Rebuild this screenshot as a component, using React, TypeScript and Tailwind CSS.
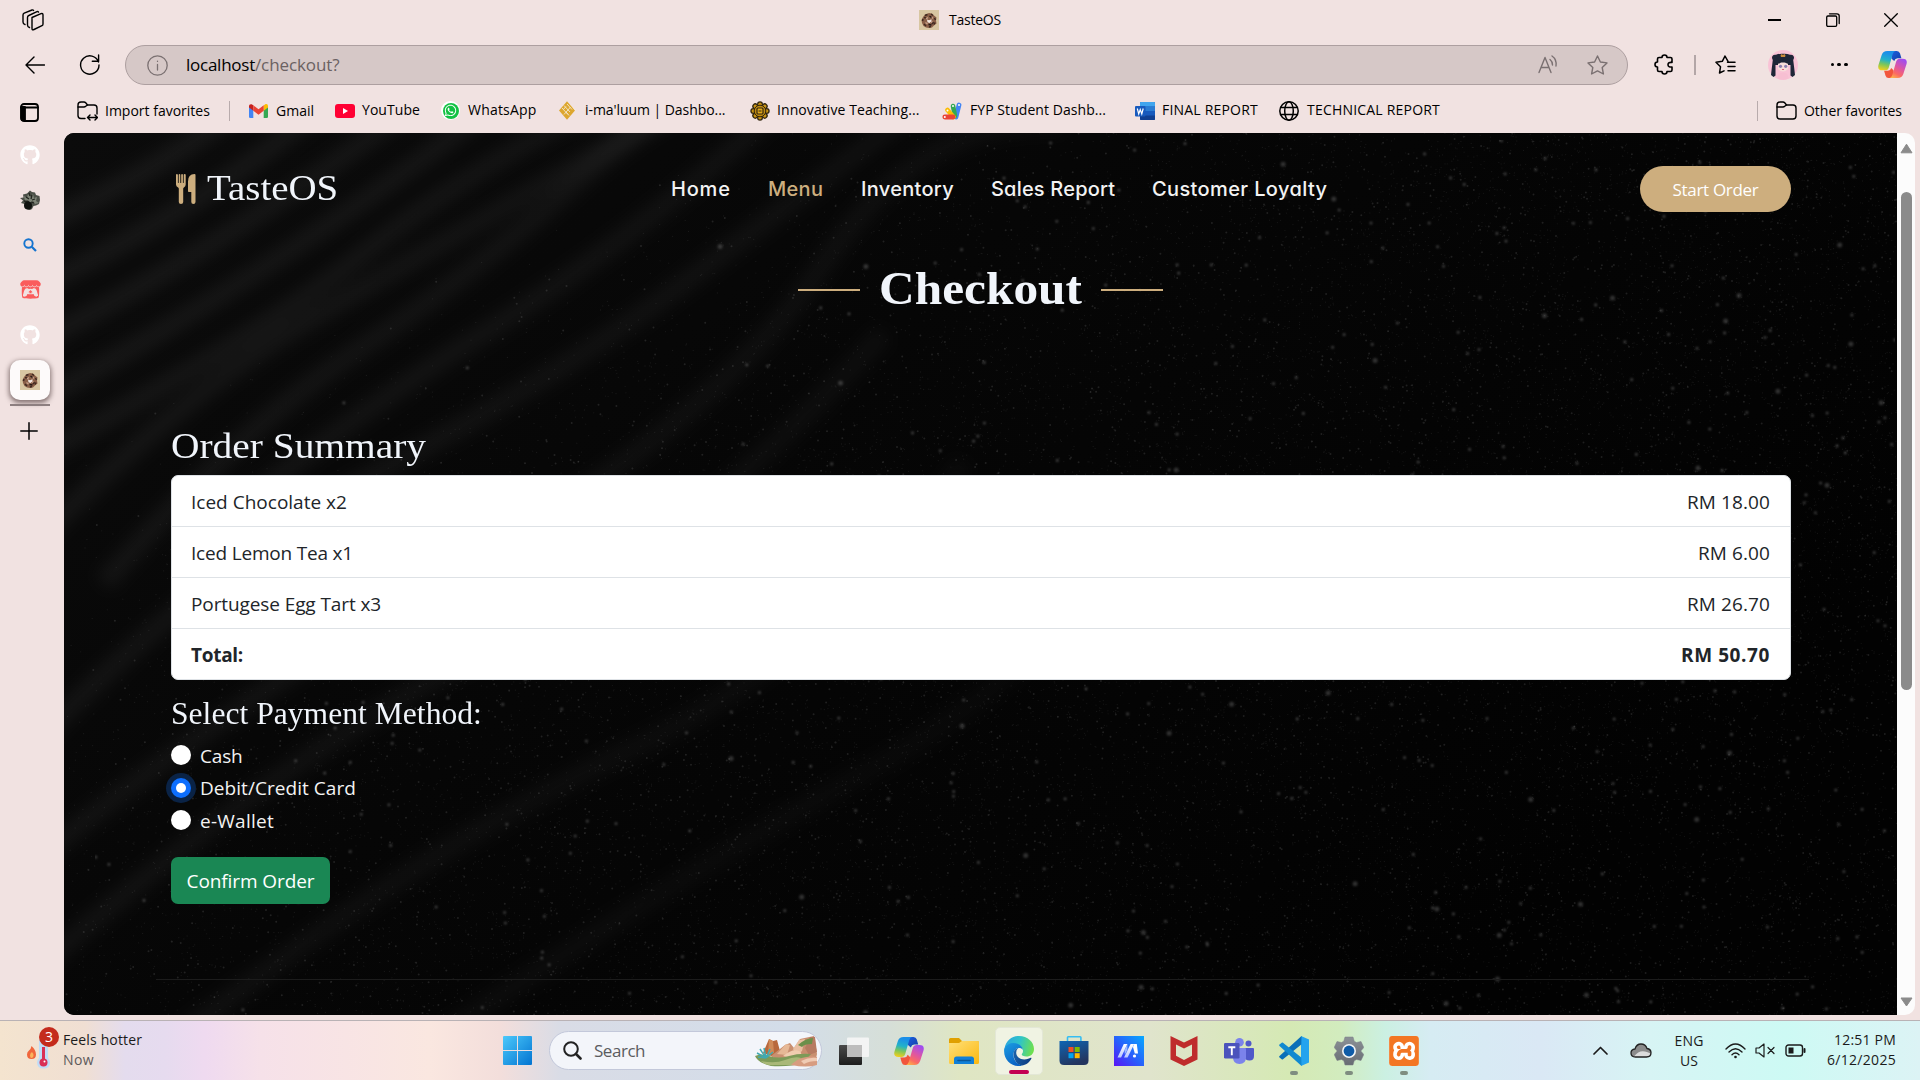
import React from 'react';
import { FaGithub, FaItchIo, FaWhatsapp } from 'react-icons/fa';
import { SiXampp } from 'react-icons/si';

const UI = "font-['Open_Sans','Noto_Sans',sans-serif]";
const SERIF = "font-['Liberation_Serif',serif]";

/* ---------- background texture ---------- */

function rng(seed: number) {
  let s = seed;
  return () => {
    s = (s * 1664525 + 1013904223) % 4294967296;
    return s / 4294967296;
  };
}

function specks(seed: number, count: number, size: number, bias: number) {
  const r = rng(seed);
  let d = '';
  for (let i = 0; i < count; i++) {
    const u = Math.pow(r(), bias);
    const v = r();
    const x = u * 1833;
    const y = v * 882;
    if (x / 1833 + y / 882 < 0.35 + r() * 0.5) continue;
    d += `M${x.toFixed(1)} ${y.toFixed(1)}h.01`;
  }
  return <path key={seed} d={d} stroke="#fff" strokeWidth={size} strokeLinecap="round" fill="none" />;
}

const STREAKS = [
  'M-20 90Q90 40 170 -20',
  'M-20 150Q130 80 250 -20',
  'M-20 205Q150 120 340 -20',
  'M-20 265Q210 140 420 -20',
  'M-20 320Q200 200 300 120T520 -20',
  'M-20 400Q120 260 240 190T620 -30',
  'M40 450Q170 300 290 220T500 60T640 -40',
  'M120 420Q260 300 420 200T720 -30',
  'M-20 600Q160 420 330 330T620 150T860 -30',
  'M-20 720Q180 560 420 420T760 130T1000 -10',
  'M-20 830Q220 620 420 520T820 200',
  'M120 900Q350 720 560 620T900 330',
  'M380 900Q620 740 800 640T1050 420',
];

function Texture() {
  return (
    <svg className="absolute inset-0 h-full w-full" viewBox="0 0 1833 882" preserveAspectRatio="none">
      <defs>
        <linearGradient id="base" x1="0" y1="0" x2="1" y2="0.5">
          <stop offset="0" stopColor="#0b0b0b" />
          <stop offset="0.45" stopColor="#060606" />
          <stop offset="1" stopColor="#020202" />
        </linearGradient>
        <linearGradient id="streak" gradientUnits="userSpaceOnUse" x1="0" y1="0" x2="1000" y2="650">
          <stop offset="0" stopColor="#fff" stopOpacity="0.055" />
          <stop offset="0.5" stopColor="#fff" stopOpacity="0.04" />
          <stop offset="1" stopColor="#fff" stopOpacity="0.015" />
        </linearGradient>
        <filter id="soft" x="-10%" y="-10%" width="120%" height="120%">
          <feGaussianBlur stdDeviation="8" />
        </filter>
        <filter id="dust" x="0" y="0" width="100%" height="100%">
          <feGaussianBlur stdDeviation="0.8" />
        </filter>
      </defs>
      <rect width="1833" height="882" fill="url(#base)" />
      <g filter="url(#soft)" stroke="url(#streak)" strokeWidth="20" fill="none">
        {STREAKS.map((d) => (
          <path key={d} d={d} />
        ))}
      </g>
      <g opacity="0.07">{specks(11, 26000, 1.3, 0.8)}</g>
      <g opacity="0.11">{specks(23, 3600, 2, 0.75)}</g>
      <g filter="url(#dust)">
        <g opacity="0.26">{specks(37, 500, 2.8, 0.7)}</g>
        <g opacity="0.18">{specks(41, 60, 5, 0.6)}</g>
      </g>
    </svg>
  );
}

/* ---------- icons ---------- */

const Line = ({ children, w = 20, h = 20, sw = 1.4, vb = '0 0 20 20', className = '' }: any) => (
  <svg
    width={w}
    height={h}
    viewBox={vb}
    className={'shrink-0 ' + className}
    fill="none"
    stroke="currentColor"
    strokeWidth={sw}
    strokeLinecap="round"
    strokeLinejoin="round"
  >
    {children}
  </svg>
);

const Favicon = () => (
  <svg width="20" height="20" viewBox="0 0 20 20" className="shrink-0">
    <rect width="20" height="20" fill="#d8c6a2" />
    <path d="M10 3l3 .5 2 2 2.500 2-.5 3 .5 3-2.500 2-2 2-3 .5-3-.5-2.500-1.500-1.500-3-.5-3 1.500-3L6 4.500Z" fill="#8a5f48" />
    <path d="M6 5.500l2.500-1M12 4l2 1.500M15.500 8l1 2M16 12.500l-1 2M12 16.500l-2 .5M7 16l-2-2M3.500 11l.5-2M5 7.500l2 .5M13 14l1.500-2" stroke="#3f2820" strokeWidth="1.500" />
    <path d="M7 9l2-1.500M12.500 7l1.500 1.500M6.500 12.500l2 1.500M12 12.500l1.500-1" stroke="#c9a28c" strokeWidth="1.200" />
    <path d="M8 9.500l2 .8 2.500-1v2l-2 1.700-2-.8Z" fill="#f3e9e2" />
    <path d="M10.500 6l2 1.500M9.500 14.500l3 .5" stroke="#241815" strokeWidth="1.400" />
  </svg>
);

const Copilot = ({ id, size }: { id: string; size: number }) => (
  <svg width={size} height={size} viewBox="0 0 30 28" className="shrink-0">
    <defs>
      <linearGradient id={id + 'a'} x1="0.5" y1="0" x2="0.3" y2="1">
        <stop offset="0.1" stopColor="#1b8fe8" />
        <stop offset="0.45" stopColor="#22b2c9" />
        <stop offset="0.7" stopColor="#7cc65a" />
        <stop offset="1" stopColor="#f2cf1d" />
      </linearGradient>
      <linearGradient id={id + 'b'} x1="0.7" y1="0" x2="0.2" y2="1">
        <stop offset="0" stopColor="#a04df0" />
        <stop offset="0.45" stopColor="#e0569f" />
        <stop offset="0.75" stopColor="#fb6a63" />
        <stop offset="1" stopColor="#fdb04a" />
      </linearGradient>
      <linearGradient id={id + 'c'} x1="0" y1="0" x2="1" y2="1">
        <stop offset="0" stopColor="#1d5fe0" />
        <stop offset="1" stopColor="#123fa8" />
      </linearGradient>
    </defs>
    <path d="M13 0h6.500q2.500 0 3.300 2.600l1.400 5h-4q-2.600 0-3.400 2.800L14 8Z" fill={`url(#${id}c)`} />
    <path d="M17 28h-6q-2.500 0-3.300-2.600L6.300 20.500h4q2.600 0 3.400-2.800L16 20Z" fill="#f2553c" />
    <path d="M9.500 0h8.500q-2 .6-2.800 3.200l-4 13.800q-.9 3-3.700 3H4.500Q-.9 20 .5 14.500L3.800 4.200Q5.200 0 9.500 0Z" fill={`url(#${id}a)`} />
    <path d="M20.500 28h-8.500q2-.6 2.800-3.200l4-13.800q.9-3 3.700-3h3Q30.900 8 29.500 13.500L26.200 23.800Q24.800 28 20.500 28Z" fill={`url(#${id}b)`} />
  </svg>
);

const Avatar = () => (
  <svg width="30" height="30" viewBox="0 0 30 30" className="shrink-0">
    <circle cx="15" cy="15" r="15" fill="#f9c3d6" />
    <path d="M4 7q1-3 4-2.200Q11 3.500 15 3.800q4-.3 7 1 3-.8 4 2.200 0 2-.8 3l1 8 .8 7-2.500 2-2-1.500V15H7.500v10.500L5.500 27 3 25l.8-7 1-8Q4 9 4 7Z" fill="#1f2638" />
    <path d="M10 12.500h10v6.500q-5 5-10 0Z" fill="#f8dedb" />
    <path d="M9.500 14Q14 13 15 9q1 4 5.500 5V8h-11Z" fill="#1f2638" />
    <circle cx="12.500" cy="16.300" r="1.600" fill="#8d7fb0" />
    <circle cx="17.700" cy="16.300" r="1.600" fill="#8d7fb0" />
    <path d="M14 19.500h2" stroke="#d8546c" strokeWidth="0.900" />
    <path d="M10.500 24q4.500-3 9 0l1 4.500q-5.500 2.500-11 0Z" fill="#f7bfd2" />
    <path d="M12.500 5.500l1-1.500 1.500 1 1.500-1 1 1.500-.5 1.500h-4Z" fill="#c98a3c" />
  </svg>
);

const ImportIcon = () => (
  <Line w={21} h={20} vb="0 0 21 20">
    <path d="M8 17.500H4Q1 17.500 1 14.500V4Q1 1 4 1h3q1 0 1.700.8L10.500 4H17q3 0 3 3v6" />
    <path d="M1 6h6q1 0 1.700-.7L10.500 4" />
    <path d="M11 16.500h9M13 14l-2.500 2.500L13 19M18 14l2.500 2.500L18 19" />
  </Line>
);

const FolderLine = () => (
  <Line w={21} h={19} vb="0 0 21 19">
    <path d="M1 4Q1 1 4 1h3q1 0 1.700.8L10.500 4H17q3 0 3 3v8q0 3-3 3H4q-3 0-3-3Z" />
    <path d="M1 6h6q1 0 1.700-.7L10.500 4" />
  </Line>
);

const Gmail = () => (
  <svg width="19" height="14" viewBox="0 0 19 14" className="shrink-0">
    <path d="M0 2.500v10.200Q0 14 1.300 14H4.300V5.500Z" fill="#4285f4" />
    <path d="M19 2.500v10.200q0 1.300-1.300 1.300h-3V5.500Z" fill="#34a853" />
    <path d="M14.700 1.500v5.300L19 3.500V2q0-2.200-2.400-2Z" fill="#fbbc04" />
    <path d="M0 3.500 4.300 6.800V1.200L2.600.2Q0-.2 0 2Z" fill="#c5221f" />
    <path d="M4.300 1.300v5.500L9.500 10.700 14.700 6.800V1.300L9.500 5.300Z" fill="#ea4335" />
  </svg>
);

const YouTube = () => (
  <svg width="20" height="14" viewBox="0 0 20 14" className="shrink-0">
    <rect width="20" height="14" rx="3" fill="#ff0033" />
    <path d="M8 4v6l5-3Z" fill="#fff" />
  </svg>
);

const Maluum = () => (
  <svg width="18" height="19" viewBox="0 0 18 19" className="shrink-0">
    <path d="M12 4l5.500 5-5.500 5Z" fill="#fffaf0" />
    <path d="M9 .3 17 9.500 9 18.700 1 9.500Z" fill="#dda62e" />
    <path d="M6 4.500 12 11M4 7l6 6.500M9 3l5 5.500M12.500 6 6 13.500M8 11l3 3.500M5.500 8.500 8 5.500" stroke="#f4e6cc" strokeWidth="0.9" />
  </svg>
);

const Mandala = () => (
  <svg width="20" height="20" viewBox="0 0 20 20" className="shrink-0">
    {[0, 45, 90, 135, 180, 225, 270, 315].map((a) => (
      <g key={a} transform={`rotate(${a} 10 10)`}>
        <circle cx="10" cy="3.300" r="3" fill="#33270f" />
        <circle cx="10" cy="3.300" r="1.700" fill="#c99414" />
      </g>
    ))}
    <circle cx="10" cy="10" r="5.800" fill="#c08c12" stroke="#33270f" strokeWidth="1" />
    <rect x="7" y="7" width="6" height="6" rx="1" fill="#e0a91d" stroke="#33270f" strokeWidth="1.200" />
    <path d="M8.500 10h3" stroke="#33270f" strokeWidth="1" />
  </svg>
);

const Fyp = () => (
  <svg width="20" height="18" viewBox="0 0 20 18" className="shrink-0" strokeLinecap="round">
    <path d="M17 3 14 15" stroke="#4285f4" strokeWidth="4.800" />
    <path d="M11 4l2 10" stroke="#34a853" strokeWidth="4.600" />
    <path d="M5.500 8l6 7" stroke="#fbbc04" strokeWidth="4.600" />
    <path d="M2.800 15H11" stroke="#ea4335" strokeWidth="4.800" />
    <circle cx="17" cy="3" r="1" fill="#fff" />
    <circle cx="11" cy="4" r="1" fill="#fff" />
    <circle cx="5.500" cy="8.500" r="1" fill="#fff" />
    <circle cx="2.800" cy="15" r="1" fill="#fff" />
  </svg>
);

const Word = () => (
  <svg width="20" height="18" viewBox="0 0 20 18" className="shrink-0">
    <rect x="5" y="0" width="15" height="18" rx="1" fill="#185abd" />
    <path d="M5 1q0-1 1-1h13q1 0 1 1v3.500H5Z" fill="#41a5ee" />
    <path d="M5 4.500h15V9H5Z" fill="#2b7cd3" />
    <path d="M5 13.500h15V17q0 1-1 1H6q-1 0-1-1Z" fill="#103f91" />
    <rect x="0" y="4" width="10.500" height="10.500" rx="1" fill="#185abd" />
    <path d="M2.300 6.500 3.700 12 5.250 7.500 6.800 12 8.200 6.500" stroke="#fff" strokeWidth="1.200" fill="none" />
  </svg>
);

const Globe = () => (
  <Line sw={1.5}>
    <circle cx="10" cy="10" r="9.200" />
    <ellipse cx="10" cy="10" rx="4.300" ry="9.200" />
    <path d="M1.800 6.500h16.400M1.800 13.500h16.400" />
  </Line>
);

const Utensils = () => (
  <svg width="20" height="30" viewBox="0 0 20 30" className="shrink-0" fill="#cdae7e">
    <path d="M0 1Q0 0 .9 0t1 1v7.500q0 .5.4.5t.4-.5V1Q2.700 0 3.500 0t.8 1v7.500q0 .5.450.5t.450-.5V1Q5.200 0 6.100 0t.8 1v7.500q0 .5.400.5t.400-.5V1Q7.700 0 8.700 0t1 1v9.500q0 2-1.800 3.100-.7.400-.7 1.200V28q0 2-2.200 2t-2.200-2V14.800q0-.8-.7-1.200Q0 12.500 0 10.500Z" />
    <path d="M19.500 1v27q0 2-2.100 2t-2.100-2V18h-2.500q-.8 0-.8-.8V7.500Q12 0 18.500 0q1 0 1 1Z" />
  </svg>
);

const TaskView = () => (
  <svg width="30" height="28" viewBox="0 0 30 28">
    <defs>
      <linearGradient id="tvd" x1="0" y1="0" x2="0" y2="1">
        <stop offset="0" stopColor="#4a4a4a" />
        <stop offset="1" stopColor="#1d1d1d" />
      </linearGradient>
    </defs>
    <rect x="0" y="8" width="23" height="20" rx="1" fill="url(#tvd)" />
    <rect x="8" y="0.500" width="22" height="19.500" rx="1" fill="#f4f4f4" fillOpacity="0.95" />
    <path d="M8 8h15v12H8Z" fill="#bdbdbd" />
  </svg>
);

const Explorer = () => (
  <svg width="30" height="26" viewBox="0 0 30 26">
    <defs>
      <linearGradient id="exf" x1="0" y1="0" x2="1" y2="1">
        <stop offset="0" stopColor="#ffe07a" />
        <stop offset="1" stopColor="#fbb80f" />
      </linearGradient>
    </defs>
    <path d="M0 1.500Q0 0 1.500 0H10l3 3h15.500Q30 3 30 4.500V10H0Z" fill="#e0a000" />
    <path d="M0 5h10l3-2h15.500Q30 3 30 4.500v20q0 1.500-1.500 1.500h-27Q0 26 0 24.500Z" fill="url(#exf)" />
    <path d="M5 26v-5q0-2.500 2.500-2.500h15Q25 18.500 25 21v5Z" fill="#1180d8" />
    <path d="M9 22.500h12" stroke="#0a5799" strokeWidth="1.600" strokeLinecap="round" />
  </svg>
);

const Edge = () => (
  <svg width="30" height="30" viewBox="0 0 30 30">
    <defs>
      <linearGradient id="eg1" x1="0" y1="0.3" x2="1" y2="0.5">
        <stop offset="0" stopColor="#2aa5e0" />
        <stop offset="0.5" stopColor="#2fc4c8" />
        <stop offset="1" stopColor="#6fe04d" />
      </linearGradient>
      <linearGradient id="eg2" x1="0" y1="0" x2="0.5" y2="1">
        <stop offset="0" stopColor="#1b9de2" />
        <stop offset="1" stopColor="#0b63c4" />
      </linearGradient>
      <linearGradient id="eg3" x1="0" y1="0" x2="1" y2="0.3">
        <stop offset="0" stopColor="#1a64ad" />
        <stop offset="1" stopColor="#0d3f85" />
      </linearGradient>
    </defs>
    <path d="M.5 12.500C2 4.500 8 0 15 0c8.500 0 15 6 15 13 0 5-3.500 7.500-7.500 7.500-3 0-4.800-1-4.800-1.900 0-.8 1.300-1.300 1.300-3.600 0-3.500-3.500-7-8.500-7-4.500 0-8 2-10 4.500Z" fill="url(#eg1)" />
    <path d="M.2 12.800C2 9 5.500 7 9.500 7c5.500 0 9 3.500 9.500 7-1-1.500-2.500-2-4-2-3 0-5.500 3-5.500 7 0 5.500 4 9.500 8.500 10.500Q16.500 30 15 30C7 30-1 23.500.2 12.800Z" fill="url(#eg2)" />
    <path d="M9.500 18c0-3 2-5.500 4.700-6q-2 1.500-2 4.500c0 4 3.500 6.900 8 6.900 3 0 5.300-.9 6.500-1.600q1.100-.4.700.8C25.500 26.500 21.500 29.500 18 29.500c-5-.5-8.500-6-8.500-11.500Z" fill="url(#eg3)" />
  </svg>
);

const Store = () => (
  <svg width="30" height="29" viewBox="0 0 30 29">
    <defs>
      <linearGradient id="st1" x1="0" y1="0" x2="0.4" y2="1">
        <stop offset="0" stopColor="#0f65b3" />
        <stop offset="1" stopColor="#23355f" />
      </linearGradient>
    </defs>
    <path d="M8.500 5V1.500q0-.7.7-.7h12q.7 0 .7.700V5" fill="none" stroke="#36bdf2" strokeWidth="1.600" />
    <path d="M.5 5H29.500V24.500Q29.500 29 25 29H5Q.5 29 .5 24.500Z" fill="url(#st1)" />
    <path d="M9.500 11h5v5h-5Z" fill="#f25022" />
    <path d="M15.700 11h5v5h-5Z" fill="#7fba00" />
    <path d="M9.500 17.200h5v5h-5Z" fill="#00a4ef" />
    <path d="M15.700 17.200h5v5h-5Z" fill="#ffb900" />
  </svg>
);

const MyAsus = () => (
  <svg width="30" height="30" viewBox="0 0 30 30">
    <defs>
      <linearGradient id="as1" x1="0" y1="1" x2="1" y2="0">
        <stop offset="0" stopColor="#5a13f5" />
        <stop offset="0.45" stopColor="#2a5cfb" />
        <stop offset="1" stopColor="#06a9ff" />
      </linearGradient>
      <linearGradient id="as2" x1="0" y1="0" x2="0" y2="1">
        <stop offset="0" stopColor="#fff" />
        <stop offset="1" stopColor="#b9c8ff" />
      </linearGradient>
    </defs>
    <rect width="30" height="30" fill="url(#as1)" />
    <path d="M3.500 21.500 9.800 8h3.600L7.100 21.500Z" fill="url(#as2)" />
    <path d="M13.400 8v6l-2.600 4.500-.3-4Z" fill="#9fb9ff" />
    <path d="M10 21.500 16.600 8h3.600l-6.600 13.500Z" fill="url(#as2)" />
    <path d="M20.200 8h2.600l1.200 9.500h-3.200L19 11Z" fill="#fff" />
    <circle cx="20.500" cy="20" r="1.600" fill="#fff" />
  </svg>
);

const McAfee = () => (
  <svg width="28" height="30" viewBox="0 0 28 30">
    <path d="M.5 0 14 6.500 27.500 0v23.500L14 30 .5 23.500ZM6 8.500v11.300L14 24l8-4.200V8.500L14 12.500Z" fill="#bf2c2c" fillRule="evenodd" />
  </svg>
);

const Teams = () => (
  <svg width="30" height="26" viewBox="0 0 30 26">
    <circle cx="24.500" cy="5.500" r="3" fill="#5059c9" />
    <circle cx="15.500" cy="4.300" r="4.300" fill="#7b83eb" />
    <path d="M20 10h9q1 0 1 1v7q0 4.500-4.500 4.500T20 18Z" fill="#5059c9" />
    <path d="M9 10h12q1 0 1 1v8.500q0 6.500-6.500 6.500T9 19.500Z" fill="#7b83eb" />
    <rect x="0" y="5" width="15.500" height="15.500" rx="1.200" fill="#4b53bc" />
    <path d="M4.300 9.200h7M7.800 9.200v8" stroke="#fff" strokeWidth="1.900" />
  </svg>
);

const VSCode = () => (
  <svg width="30" height="30" viewBox="0 0 30 30">
    <path d="M22 0 30 3.600V26.400L22 30Z" fill="#24a3ee" />
    <path d="M22.500 0 22.300 8.500 4 23.300q-.7.500-1.300 0L.5 21.500q-.7-.7 0-1.400Z" fill="#0a6fb8" />
    <path d="M22.500 30l-.2-8.500L4 6.700q-.7-.5-1.300 0L.5 8.500q-.7.700 0 1.400Z" fill="#1189d0" />
  </svg>
);

const Settings = () => (
  <svg width="30" height="30" viewBox="0 0 30 30">
    <defs>
      <linearGradient id="se1" x1="0" y1="0" x2="0" y2="1">
        <stop offset="0" stopColor="#8c9197" />
        <stop offset="1" stopColor="#676c73" />
      </linearGradient>
    </defs>
    <path d="M11 1h8l1.200 4.200 2.300 1.300L27 5.500l2.800 6-3 3.500 3 3.500-2.800 6-4.500-1-2.300 1.300L19 29h-8l-1.200-4.200-2.300-1.300-4.500 1-2.800-6 3-3.500-3-3.500 2.800-6 4.500 1 2.300-1.300Z" fill="url(#se1)" stroke="#7a7f86" strokeWidth="0.500" strokeLinejoin="round" />
    <circle cx="15" cy="15" r="7" fill="#f3f5f7" />
    <circle cx="15" cy="15" r="5.400" fill="#0f5ba8" />
  </svg>
);

const Xampp = () => (
  <span className="grid size-[30px] place-items-center rounded-[4px] bg-white">
    <SiXampp className="size-[30px] text-[#f37623]" />
  </span>
);

const SearchArt = () => (
  <svg width="63" height="31" viewBox="0 0 63 31" className="shrink-0">
    <path d="M8 17 14 3l4 2 4-1 3 11-6 6Z" fill="#b8683c" />
    <path d="M14 3l4 2 1 12-6 2Z" fill="#d08a58" />
    <path d="M16 20 30 9l5-2 4 5 6-9 14-3 3 18-2 9-30 2Z" fill="#c98f70" />
    <path d="M22 18 31 8l4 1-3 10Z" fill="#e6b896" />
    <path d="M38 13l6-9 6-1-3 12-6 5Z" fill="#e9bfa2" />
    <path d="M50 12 55 1l5 0 2 15-8 3Z" fill="#b77b62" />
    <path d="M43 9q8-7 15-7l-1 6q-8 0-10 3Z" fill="#6b8f4a" />
    <path d="M28 20q10-8 16-5t-4 8Z" fill="#f0cdb0" />
    <path d="M0 20q6-3 14 0 10 3 20 0t22-2l-8 9q-12 4-32 3Q3 27 0 20Z" fill="#7d9a58" />
    <path d="M6 25q14 3 24-1t16-2l-4 7H20Q11 30 6 25Z" fill="#a9b878" />
    <path d="M38 27q10-8 24-6v8q-10 3-26 0Z" fill="#d79c80" />
    <path d="M46 25q8-4 16-3v3q-8 0-13 3Z" fill="#f0cbb4" />
    <path d="M11 22 2 17M11 22 5 13M11 22 9 12M11 22l4-9M11 22l7-6M11 22 3 21" stroke="#3fa9b0" strokeWidth="1.500" />
  </svg>
);

/* ---------- browser chrome ---------- */

function TitleBar() {
  return (
    <div className="flex h-[40px] items-center">
      <Line w={22} h={22} vb="0 0 22 22" className="ml-[22px]" sw={1.4}>
        <path d="M10 8.500 19 4.600Q21 4 21 6v9q0 1.200-1 1.700L12 20.500Q10 21.500 10 19.500Z" />
        <path d="M7.500 18.500Q5.500 18 5.500 16V8.500q0-1.500 1.300-2L15 2.700q1-.4 1.500.4" />
        <path d="M3 15.500q-2-.5-2-2.500V6q0-1.300 1.200-1.900L10 1q1-.4 1.500.4" />
      </Line>
      <div className="ml-[875px] flex items-center gap-[10px]">
        <Favicon />
        <span className="pb-px text-[14px] tracking-[-0.23px]">TasteOS</span>
      </div>
      <div className="mr-[22px] ml-auto flex items-center gap-[44px]">
        <span className="mr-px h-[1.400px] w-[13px] bg-black" />
        <Line w={14} h={14} vb="0 0 14 14" sw={1.3}>
          <rect x="0.700" y="3" width="10" height="10.300" rx="1.200" />
          <path d="M3.500.8H11q2.200 0 2.200 2.200v7.500" />
        </Line>
        <Line w={14} h={14} vb="0 0 14 14" sw={1.3}>
          <path d="M.7.7l12.600 12.600M13.300.7.7 13.300" />
        </Line>
      </div>
    </div>
  );
}

function Toolbar() {
  return (
    <div className="flex h-[49px] items-center">
      <Line w={20} h={18} vb="0 0 20 18" className="ml-[25px]">
        <path d="M9 1 1 9l8 8M1 9h18.500" />
      </Line>
      <Line w={21} h={21} vb="0 0 21 21" className="ml-[34px]">
        <path d="M19.500 8A9.200 9.200 0 1 0 20 11M19.600 1v6.300h-6.300" />
      </Line>
      <div className="mt-px ml-[25px] flex h-[40px] w-[1503px] items-center rounded-full border border-[#ad9fa0] bg-[#d6c8c7] text-[#7a7071]">
        <Line w={21} h={21} vb="0 0 21 21" className="ml-[21px]" sw={1.3}>
          <circle cx="10.500" cy="10.500" r="9.700" />
          <path d="M10.500 9.500v5.500M10.500 6.200v.2" />
        </Line>
        <div className="ml-[18px] pb-[2px] text-[17px] leading-none whitespace-nowrap">
          <span className="tracking-[-0.25px] text-black">localhost</span>
          <span className="tracking-[-0.1px] text-[#6b6162]">/checkout?</span>
        </div>
        <Line w={21} h={20} vb="0 0 21 20" className="ml-auto">
          <path d="M1 17.500 7 2.500l6 15M3 12.500h8" />
          <path d="M12 4.500q2.500 2 2.500 5.500M14 1q5 3.500 4 10" />
        </Line>
        <Line w={21} h={20} vb="0 0 21 20" className="mr-[19px] ml-[28px]">
          <path d="M10.500 1l2.900 6 6.600.9-4.800 4.600 1.200 6.500-5.900-3.100L4.600 19l1.200-6.500L1 7.900 7.600 7Z" />
        </Line>
      </div>
      <Line w={21} h={21} vb="0 0 21 21" className="ml-[26px]" sw={1.6}>
        <path d="M5 3.500h3Q8 1 10.500 1T13 3.500h3.500q1.500 0 1.500 1.500v3.500q-4-.5-4 2.200t4 2.300V16q0 1.500-1.500 1.500H13q0 2.500-2.500 2.500T8 17.500H5Q3.500 17.500 3.500 16v-3Q1 13 1 10.500T3.500 8V5Q3.500 3.500 5 3.500Z" />
      </Line>
      <span className="ml-[19px] h-[20px] w-[1.500px] bg-[#b3a6a7]" />
      <Line w={21} h={19} vb="0 0 21 19" className="ml-[19px]" sw={1.5}>
        <path d="M13 6.300 10 1 7.300 6.300 1 7.300l4.500 4.500-1 6.200L9 15.800M12.500 7.200H20M13 11.500h7M13 15.800h7" />
      </Line>
      <div className="ml-[32px]">
        <Avatar />
      </div>
      <div className="ml-[33px] flex gap-[3.500px]">
        <span className="size-[3.400px] rounded-full bg-black" />
        <span className="size-[3.400px] rounded-full bg-black" />
        <span className="size-[3.400px] rounded-full bg-black" />
      </div>
      <div className="ml-[30px]">
        <Copilot id="tb" size={29} />
      </div>
    </div>
  );
}

function Mark({ icon, label, box, text = '' }: { icon: React.ReactNode; label: string; box: string; text?: string }) {
  return (
    <div className={'flex shrink-0 items-center ' + box}>
      <span className="flex w-[27px] shrink-0 items-center">{icon}</span>
      <span className={'text-[14px] whitespace-nowrap ' + text}>{label}</span>
    </div>
  );
}

function Bookmarks() {
  return (
    <div className="flex h-[43px] items-center pl-[77px]">
      <Mark icon={<ImportIcon />} label="Import favorites" box="w-[152px]" text="ml-px pb-px" />
      <span className="mr-[19px] h-[20px] w-px bg-[#b8abac]" />
      <Mark icon={<Gmail />} label="Gmail" box="w-[86px]" text="pb-px" />
      <Mark icon={<YouTube />} label="YouTube" box="w-[106px]" text="pb-[2px] tracking-[0.06px]" />
      <Mark
        icon={
          <span className="grid size-[19px] place-items-center rounded-full bg-white">
            <span className="grid size-[16px] place-items-center rounded-full bg-[#12c143]">
              <FaWhatsapp className="size-[13px] text-white" />
            </span>
          </span>
        }
        label="WhatsApp"
        box="w-[117px]"
        text="pb-[2px] tracking-[0.2px]"
      />
      <Mark icon={<Maluum />} label="i-ma'luum | Dashbo..." box="w-[192px]" text="pb-[2px] tracking-[-0.06px]" />
      <Mark icon={<Mandala />} label="Innovative Teaching..." box="w-[192px]" text="pb-[2px] tracking-[0.08px]" />
      <Mark icon={<Fyp />} label="FYP Student Dashb..." box="w-[193px]" text="ml-px pb-[2px] tracking-[0.06px]" />
      <Mark icon={<Word />} label="FINAL REPORT" box="w-[144px]" text="pb-[2px] tracking-[0.2px]" />
      <Mark icon={<Globe />} label="TECHNICAL REPORT" box="w-[200px]" text="ml-px pb-[2px] tracking-[0.2px]" />
      <span className="mr-[18px] ml-auto h-[20px] w-px bg-[#b8abac]" />
      <Mark icon={<FolderLine />} label="Other favorites" box="w-[144px]" text="ml-px pb-px tracking-[-0.03px]" />
    </div>
  );
}

function Sidebar() {
  return (
    <div className="-mt-[44px] flex w-[64px] shrink-0 flex-col pl-[10px]">
      <div className="flex w-[40px] flex-col items-center">
        <div className="flex h-[43px] items-center">
          <Line w={19} h={19} vb="0 0 19 19" sw={1.8} className="mt-[4px] -ml-[2px]">
            <rect x="1" y="1" width="17" height="17" rx="3" />
            <path d="M1 4.500h17" />
            <path d="M1.500 4h3.500v13.500H3q-1.500 0-1.500-1.500Z" fill="currentColor" />
          </Line>
        </div>
        <div className="flex h-[45px] items-center">
          <FaGithub className="size-[20px] text-white" />
        </div>
        <div className="flex h-[45px] items-center">
          <svg width="20" height="20" viewBox="0 0 20 20">
            <path d="M10 .5l2 1.500 3 .5 1 2.500 3.500 1L20 10l-1 4-3 1.500-2.500.5L12 19q-3 2-6-.5L4.500 14 1 13l2-2.500L0 8l3.500-.5L3 4.500l4-1Z" fill="#4c5048" />
            <path d="M4 6l3 2 1-4 3 3 2-3 1 4 3-1-1 4 3 2-4 1-2-3-3 2-2-3-3 1Z" fill="#7d8376" />
            <path d="M6 7l3 2M12 5l-1 4M15 9l-3 1M4 11l5 1M14 13l-3-1M9 3l1 3" stroke="#22251f" strokeWidth="1.300" />
            <circle cx="8" cy="15.500" r="4" fill="#10120f" />
          </svg>
        </div>
        <div className="flex h-[45px] items-center">
          <svg width="14" height="14" viewBox="0 0 14 14" fill="none" stroke="#1674cf" className="mt-px">
            <circle cx="5.500" cy="5.500" r="4.200" strokeWidth="1.900" />
            <path d="M8.700 8.700 13 13" strokeWidth="2.200" />
          </svg>
        </div>
        <div className="flex h-[45px] items-center">
          <FaItchIo className="size-[21px] text-[#fa5c5c]" />
        </div>
        <div className="flex h-[45px] items-center">
          <FaGithub className="size-[20px] text-white" />
        </div>
        <div className="mt-[3px] grid size-[40px] place-items-center rounded-[10px] bg-[#fdfafa] shadow-[0_2px_5px_1px_rgba(60,40,40,0.6)]">
          <Favicon />
        </div>
        <span className="mt-[4px] h-[1.500px] w-[40px] bg-[#8d7f80]" />
        <Line w={18} h={18} vb="0 0 18 18" className="mt-[16px] -ml-[2px]" sw={1.5}>
          <path d="M9 .8v16.400M.8 9h16.400" />
        </Line>
      </div>
    </div>
  );
}

/* ---------- page ---------- */

const NAV = [
  { label: 'Home', cls: 'w-[97px] tracking-[0.8px] text-[#f3f3f3]' },
  { label: 'Menu', cls: 'w-[93px] tracking-[0.3px] text-[#cdae7e]' },
  { label: 'Inventory', cls: 'w-[130px] tracking-[0.3px] text-[#f3f3f3]' },
  { label: 'Sales Report', cls: 'w-[161px] tracking-[0.2px] text-[#f3f3f3]' },
  { label: 'Customer Loyalty', cls: 'w-[190px] tracking-[0.38px] text-[#f3f3f3]' },
];

const ROWS = [
  { name: 'Iced Chocolate x2', price: 'RM 18.00', t: 'tracking-[0.01px]' },
  { name: 'Iced Lemon Tea x1', price: 'RM 6.00', t: 'tracking-[-0.19px]' },
  { name: 'Portugese Egg Tart x3', price: 'RM 26.70', t: 'tracking-[-0.1px]' },
];

function Radio({ label, on = false, cls = '' }: { label: string; on?: boolean; cls?: string }) {
  return (
    <label className="flex h-[32.500px] items-center">
      {on ? (
        <span className="grid size-[20px] place-items-center rounded-full bg-[#0d6efd] shadow-[0_0_0_5px_#0a2346]">
          <span className="size-[9.500px] rounded-full bg-white" />
        </span>
      ) : (
        <span className="size-[20px] rounded-full bg-white" />
      )}
      <span className={'ml-[9px] pt-px text-[19px] leading-[30px] text-[#f3f3f3] ' + cls}>{label}</span>
    </label>
  );
}

function Page() {
  return (
    <main className="relative h-full w-[1833px] overflow-hidden bg-black text-[#f1f5fb]">
      <Texture />
      <div className="relative flex h-full flex-col">
        <header className="flex h-[112px] items-center pr-[106px] pl-[112px]">
          <Utensils />
          <div className="ml-[11px] w-[464px] pb-[3px]">
            <span className={'inline-block origin-left scale-x-[1.08] text-[36px] leading-none ' + SERIF}>TasteOS</span>
          </div>
          <nav className="flex items-center font-['Inter',sans-serif] text-[20px] leading-none font-medium whitespace-nowrap [font-feature-settings:'cv11']">
            {NAV.map((n) => (
              <a key={n.label} className={n.cls}>
                {n.label}
              </a>
            ))}
          </nav>
          <button className="ml-auto h-[46px] w-[151px] rounded-full bg-[#cdae7e] pt-px text-[17px] tracking-[-0.3px] text-white">
            Start Order
          </button>
        </header>

        <div className="mt-[17px] flex h-[56px] items-center justify-center gap-[18px]">
          <span className="h-[2px] w-[62px] bg-[#cdae7e]" />
          <h1 className={'flex w-[205px] scale-x-[1.05] justify-center pb-[3px] text-[47px] leading-none font-bold ' + SERIF}>Checkout</h1>
          <span className="h-[2px] w-[62px] bg-[#cdae7e]" />
        </div>

        <section className="mt-[109px] ml-[107px] w-[1620px]">
          <h2 className={'h-[48px] w-[236px] origin-left scale-x-[1.095] text-[36px] leading-[38px] whitespace-nowrap ' + SERIF}>Order Summary</h2>
          <ul className="overflow-hidden rounded-[7px] border border-[#dee2e6] bg-white text-[19px] text-[#212529]">
            {ROWS.map((r) => (
              <li key={r.name} className="flex h-[51px] items-center justify-between border-b border-[#dee2e6] px-[20px] pt-[2px]">
                <span className={'-ml-px ' + r.t}>{r.name}</span>
                <span className="tracking-[0.1px]">{r.price}</span>
              </li>
            ))}
            <li className="flex h-[50px] items-center justify-between px-[20px] pt-[2px] font-bold">
              <span className="-ml-px tracking-[-0.29px]">Total:</span>
              <span className="tracking-[0.59px]">RM 50.70</span>
            </li>
          </ul>
          <h3 className={'mt-[15px] h-[44px] w-[306px] origin-left scale-x-[1.02] text-[31px] leading-[38px] whitespace-nowrap ' + SERIF}>
            Select Payment Method:
          </h3>
          <div>
            <Radio label="Cash" cls="tracking-[-0.2px]" />
            <Radio label="Debit/Credit Card" on cls="tracking-[0.05px]" />
            <Radio label="e-Wallet" cls="tracking-[0.26px]" />
          </div>
          <button className="mt-[20px] h-[47px] w-[159px] rounded-[7px] bg-[#1a8754] pt-[2px] text-[19px] tracking-[-0.09px] text-white">
            Confirm Order
          </button>
        </section>

        <hr className="mt-auto mr-[88px] mb-[35px] ml-[92px] border-[#1c1c1c]" />
      </div>
    </main>
  );
}

function Scrollbar() {
  return (
    <div className="flex w-[18px] flex-col items-center bg-[#fcfcfc] text-[#8b8b8b]">
      <svg width="13" height="11" viewBox="0 0 13 11" className="mt-[10px]">
        <path d="M6.500 1.200 12 9.800H1Z" fill="currentColor" stroke="currentColor" strokeLinejoin="round" />
      </svg>
      <span className="mt-[38px] h-[498px] w-[11px] rounded-full bg-[#8b8b8b]" />
      <svg width="13" height="10" viewBox="0 0 13 10" className="mt-auto mb-[8px]">
        <path d="M1 1h11L6.500 9Z" fill="currentColor" stroke="currentColor" strokeLinejoin="round" />
      </svg>
    </div>
  );
}

/* ---------- taskbar ---------- */

const APPS: { id: string; icon: React.ReactNode; active?: boolean; running?: boolean }[] = [
  { id: 'view', icon: <TaskView /> },
  { id: 'copilot', icon: <Copilot id="tk" size={30} /> },
  { id: 'explorer', icon: <Explorer /> },
  { id: 'edge', icon: <Edge />, active: true },
  { id: 'store', icon: <Store /> },
  { id: 'asus', icon: <MyAsus /> },
  { id: 'mcafee', icon: <McAfee /> },
  { id: 'teams', icon: <Teams /> },
  { id: 'code', icon: <VSCode />, running: true },
  { id: 'settings', icon: <Settings />, running: true },
  { id: 'xampp', icon: <Xampp />, running: true },
];

function Taskbar() {
  return (
    <footer className="flex h-[60px] items-center border-t border-[#b9b2b5] bg-[linear-gradient(90deg,#f4e4cf_0px,#f0dfd3_85px,#e4dcee_125px,#e6dbef_165px,#efdaf0_205px,#f6e1e9_260px,#fae7e0_430px,#f3dedb_500px,#d9dce6_560px,#d3dde9_790px,#d6dfd8_890px,#dfe6c3_960px,#e0e4cc_1150px,#d5e9b4_1290px,#d2ecbe_1340px,#cbf0e2_1385px,#d6ecf3_1430px,#dae8f5_1540px,#d7f4f4_1650px,#cdfaf4_1785px,#dcf3f5_1920px)] text-[#1b1b1b]">
      <div className="flex w-[503px] items-center pl-[27px]">
        <div className="relative h-[44px] w-[32px]">
          <svg width="26" height="36" viewBox="0 0 26 36" className="mt-[8px]">
            <path d="M4.500 9Q9 13 9 17.500T4.500 22 0 17.500Q0 15 2 13.500 4 12 4.500 9Z" fill="#f0663c" />
            <path d="M5 15q2 2 1.500 4T4.500 21 3 18.500 5 15Z" fill="#fbb35c" />
            <path d="M12 4q0-3 4.500-3T21 4v17q2 2 2 4.500 0 6-6.500 6t-6.500-6q0-2.500 2-4.500Z" fill="#bfdcf7" />
            <path d="M16.500 10v14" stroke="#d92f55" strokeWidth="3" />
            <circle cx="16.500" cy="25.500" r="4" fill="#d92f55" />
            <circle cx="17.500" cy="24.500" r="1" fill="#fff" />
          </svg>
          <span className="absolute top-[-2px] left-[12px] grid size-[20px] place-items-center rounded-full bg-[#c42b1c] text-[14px] leading-none text-white">
            3
          </span>
        </div>
        <div className="ml-[4px] flex flex-col pb-[2px] text-[14px] leading-[20px]">
          <span className="tracking-[0.14px]">Feels hotter</span>
          <span className="tracking-[0.4px] text-[#5d5a5b]">Now</span>
        </div>
      </div>
      <svg width="29" height="29" viewBox="0 0 29 29" className="shrink-0">
        <defs>
          <linearGradient id="win" x1="0" y1="0" x2="1" y2="1">
            <stop offset="0" stopColor="#4cc9fb" />
            <stop offset="1" stopColor="#0274d1" />
          </linearGradient>
        </defs>
        <path d="M1 0h13v14H0V1Q0 0 1 0ZM15 0h13q1 0 1 1v13H15ZM0 15h14v14H1q-1 0-1-1ZM15 15h14v13q0 1-1 1H15Z" fill="url(#win)" />
      </svg>
      <div className="ml-[17px] flex h-[39px] w-[273px] shrink-0 items-center rounded-full border border-[#c3c8da] bg-[#f3f5fa]">
        <svg width="19" height="19" viewBox="0 0 19 19" fill="none" stroke="#222" className="ml-[13px]" strokeLinecap="round">
          <circle cx="8" cy="8" r="6.800" strokeWidth="2" />
          <path d="M13 13l4.500 4.500" strokeWidth="2.600" />
        </svg>
        <span className="ml-[12px] text-[17px] tracking-[-0.47px] text-[#5b5c60]">Search</span>
        <span className="mr-[3px] ml-auto self-end pb-[2px]">
          <SearchArt />
        </span>
      </div>
      <div className="ml-[4px] flex">
        {APPS.map((a) => (
          <div key={a.id} className="flex h-[58px] w-[55.100px] items-center justify-center">
            <div
              className={
                a.active
                  ? 'relative grid size-[48px] place-items-center rounded-[5px] border border-[#e3e7d6] bg-[#f0f3e3]'
                  : 'relative grid size-[48px] place-items-center'
              }
            >
              {a.icon}
              {a.active && <span className="absolute bottom-[-0.500px] h-[4px] w-[20px] rounded-full bg-[#c30052]" />}
              {a.running && <span className="absolute bottom-0 h-[4px] w-[8px] rounded-full bg-[#7f8d80]" />}
            </div>
          </div>
        ))}
      </div>
      <div className="ml-auto flex items-center pr-[24px] text-[14px] leading-[20px]">
        <Line w={15} h={9} vb="0 0 15 9" sw={1.700}>
          <path d="M1 8l6.500-6.500L14 8" />
        </Line>
        <svg width="22" height="15" viewBox="0 0 22 15" className="ml-[22px]">
          <path d="M5.500 14Q1 14 1 10q0-3.500 4-4Q6.500 1 11 1t6 4.500q4 .5 4 4.300 0 4.200-4.500 4.200Z" fill="#8b8b8b" />
          <path d="M4 13.500Q9 7 15 8.500t5.500 2.500Q19.500 14 16.500 14h-11Z" fill="#dcdcdc" />
          <path d="M5.500 14Q1 14 1 10q0-3.500 4-4Q6.500 1 11 1t6 4.500q4 .5 4 4.300 0 4.200-4.500 4.200Z" fill="none" stroke="#222" strokeWidth="1.300" />
        </svg>
        <div className="ml-[22px] flex w-[30px] flex-col items-center">
          <span className="tracking-[0.17px]">ENG</span>
          <span>US</span>
        </div>
        <Line w={21} h={16} vb="0 0 21 16" className="ml-[21px]" sw={1.400}>
          <path d="M1 6Q10.500-4 20 6M4 9q6.500-6.500 13 0M7 11.800q3.500-3.400 7 0" />
          <circle cx="10.500" cy="14" r="1.300" fill="currentColor" stroke="none" />
        </Line>
        <Line w={20} h={15} vb="0 0 20 15" className="ml-[9px]" sw={1.200}>
          <path d="M1 5h3l5-4v13l-5-4H1ZM13 4.500l6 6M19 4.500l-6 6" />
        </Line>
        <Line w={21} h={13} vb="0 0 21 13" className="ml-[10px]" sw={1.400}>
          <rect x="1" y="1" width="16.500" height="11" rx="2.500" />
          <rect x="3.500" y="3.500" width="5" height="6" fill="currentColor" stroke="none" />
          <path d="M19.500 5v3" strokeWidth="2" />
        </Line>
        <div className="ml-[20px] flex w-[70px] flex-col items-end pb-[2px] whitespace-nowrap">
          <span className="tracking-[0.21px]">12:51 PM</span>
          <span className="tracking-[0.3px]">6/12/2025</span>
        </div>
      </div>
    </footer>
  );
}

export default function App() {
  return (
    <div className={'flex h-[1080px] w-[1920px] flex-col overflow-hidden bg-[#f1e2e1] text-black ' + UI}>
      <TitleBar />
      <Toolbar />
      <Bookmarks />
      <div className="mt-px flex h-[882px]">
        <Sidebar />
        <div className="flex h-[882px] w-[1851px] overflow-hidden rounded-[10px]">
          <Page />
          <Scrollbar />
        </div>
      </div>
      <div className="mt-auto">
        <Taskbar />
      </div>
    </div>
  );
}
